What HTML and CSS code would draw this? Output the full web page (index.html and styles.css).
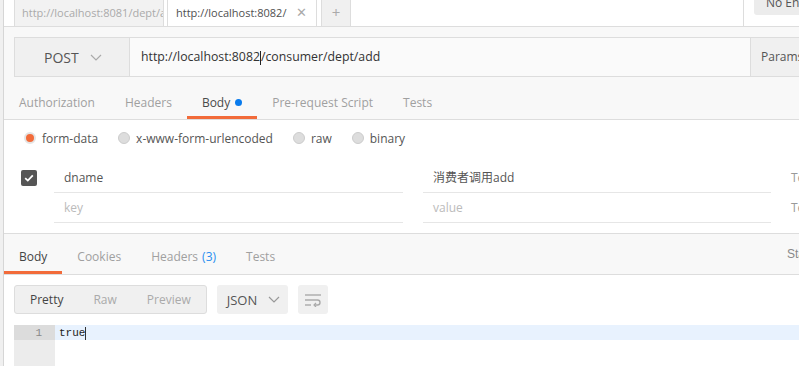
FILE: index.html
```html
<!DOCTYPE html>
<html lang="en">
<head>
    <meta charset="UTF-8">
    <title>Postman</title>
    <link rel="stylesheet" href="styles.css">
</head>
<body>
<div class="app">
    <div class="edge"></div>
    <div class="main">
        <div class="tabbar">
            <div class="tab tab-idle">http://localhost:8081/dept/add</div>
            <div class="tab tab-active"><span>http://localhost:8082/</span><span class="close">&#x2715;</span></div>
            <div class="tab tab-new">+</div>
            <div class="tabbar-fill"></div>
            <div class="env-wrap"><div class="env">No Environment</div></div>
        </div>

        <div class="req-top">
            <div class="urlrow">
                <div class="method">
                    <span>POST</span>
                    <svg width="12" height="7" viewBox="0 0 12 7"><polyline points="1,1 6,6 11,1" fill="none" stroke="#aaa" stroke-width="1.2"/></svg>
                </div>
                <div class="url">http://localhost:8082<span class="caret"></span>/consumer/dept/add</div>
                <div class="params">Params</div>
            </div>
            <div class="reqtabs">
                <div class="rtab">Authorization</div>
                <div class="rtab">Headers</div>
                <div class="rtab active">Body<span class="dot"></span></div>
                <div class="rtab">Pre-request Script</div>
                <div class="rtab">Tests</div>
            </div>
        </div>

        <div class="body-pane">
            <div class="bodytypes">
                <label class="radio"><span class="circle on"></span>form-data</label>
                <label class="radio"><span class="circle"></span>x-www-form-urlencoded</label>
                <label class="radio"><span class="circle"></span>raw</label>
                <label class="radio"><span class="circle"></span>binary</label>
            </div>
            <div class="kv">
                <div class="kv-row">
                    <div class="kv-check">
                        <span class="checkbox">
                            <svg width="10" height="8" viewBox="0 0 10 8"><polyline points="1.2,4.2 3.8,6.6 8.8,1.4" fill="none" stroke="#fff" stroke-width="1.8"/></svg>
                        </span>
                    </div>
                    <div class="kv-key">dname</div>
                    <div class="kv-val">消费者调用add</div>
                    <div class="kv-desc">Text</div>
                </div>
                <div class="kv-row">
                    <div class="kv-check"></div>
                    <div class="kv-key placeholder">key</div>
                    <div class="kv-val placeholder">value</div>
                    <div class="kv-desc">Text</div>
                </div>
            </div>
        </div>

        <div class="response">
            <div class="resp-tabs">
                <div class="rtab active">Body</div>
                <div class="rtab">Cookies</div>
                <div class="rtab">Headers <span class="count">(3)</span></div>
                <div class="rtab">Tests</div>
                <div class="status">Status: 200 OK</div>
            </div>
            <div class="toolbar">
                <div class="btn-group">
                    <span class="seg seg-on">Pretty</span>
                    <span class="seg">Raw</span>
                    <span class="seg">Preview</span>
                </div>
                <div class="format">
                    <span>JSON</span>
                    <svg width="12" height="7" viewBox="0 0 12 7"><polyline points="1,1 6,6 11,1" fill="none" stroke="#999" stroke-width="1.2"/></svg>
                </div>
                <div class="wrap-btn">
                    <svg width="18" height="14" viewBox="0 0 18 14">
                        <line x1="1" y1="2" x2="17" y2="2" stroke="#aaa" stroke-width="1.4"/>
                        <path d="M1 7 H13.5 a2.5 2.5 0 0 1 0 5 H10" fill="none" stroke="#aaa" stroke-width="1.4"/>
                        <polyline points="12,10 10,12 12,14" fill="none" stroke="#aaa" stroke-width="1.2"/>
                        <line x1="1" y1="12" x2="7" y2="12" stroke="#aaa" stroke-width="1.4"/>
                    </svg>
                </div>
            </div>
            <div class="code">
                <div class="code-line current">
                    <span class="gutter">1</span>
                    <span class="text">true<span class="caret"></span></span>
                </div>
                <div class="code-rest">
                    <span class="gutter"></span>
                </div>
            </div>
        </div>
    </div>
</div>
</body>
</html>
```

FILE: styles.css
```css
html, body {
    margin: 0;
    padding: 0;
    overflow: hidden;
    background-color: #fff;
}
body {
    font-family: 'Open Sans', 'Noto Sans CJK SC', sans-serif;
    font-size: 12px;
    color: #555;
}
.app {
    display: flex;
    height: 366px;
}
.edge {
    width: 3px;
    background-color: #f0f0f0;
    border-right: 1px solid #d6d6d6;
    flex-shrink: 0;
}
.main {
    width: 795px;
    overflow: hidden;
    display: flex;
    flex-direction: column;
}

/* top tab bar */
.tabbar {
    display: flex;
    height: 26px;
    border-bottom: 1px solid #ddd;
    padding-left: 10px;
    background-color: #fff;
    font-size: 11px;
}
.tab {
    box-sizing: border-box;
    height: 26px;
    line-height: 25px;
    border: 1px solid #ddd;
    border-top: none;
    border-bottom: none;
    white-space: nowrap;
    overflow: hidden;
    flex-shrink: 0;
}
.tab-idle {
    width: 150px;
    padding-left: 7px;
    background-color: #f2f2f2;
    color: #aaa;
}
.tab-active {
    width: 150px;
    margin-left: 3px;
    padding: 0 9px 0 8px;
    display: flex;
    justify-content: space-between;
    color: #505050;
    background-color: #fff;
}
.tab-active .close {
    color: #aaa;
    font-size: 13px;
}
.tab-new {
    width: 30px;
    margin-left: 4px;
    background-color: #f0f0f0;
    text-align: center;
    color: #aaa;
    font-size: 15px;
}
.tabbar-fill {
    flex: 1;
}
.env-wrap {
    width: 45px;
    padding-left: 10px;
    border-left: 1px solid #ddd;
    overflow: hidden;
}
.env {
    margin-top: -10px;
    height: 25px;
    line-height: 25px;
    padding-left: 12px;
    white-space: nowrap;
    background-color: #ececec;
    border-radius: 0 0 0 3px;
    color: #555;
    font-size: 12px;
}

/* request */
.req-top {
    background-color: #f8f8f8;
    padding-top: 10px;
}
.urlrow {
    display: flex;
    height: 40px;
    margin-left: 10px;
}
.method {
    box-sizing: border-box;
    width: 116px;
    flex-shrink: 0;
    display: flex;
    align-items: center;
    padding-left: 29px;
    gap: 11px;
    background-color: #f0f0f0;
    border: 1px solid #ddd;
    color: #555;
    font-size: 14px;
}
.url {
    box-sizing: border-box;
    width: 620px;
    flex-shrink: 0;
    padding-left: 11px;
    line-height: 38px;
    border-top: 1px solid #ddd;
    border-bottom: 1px solid #ddd;
    background-color: #fafafa;
    color: #333;
    font-size: 12.3px;
}
.caret {
    display: inline-block;
    width: 1px;
    height: 14px;
    background-color: #222;
    vertical-align: middle;
}
.params {
    flex-shrink: 0;
    width: 80px;
    padding-left: 10px;
    line-height: 38px;
    background-color: #f0f0f0;
    border: 1px solid #ddd;
    color: #555;
}
.reqtabs {
    display: flex;
    margin-top: 3px;
    height: 39px;
    border-bottom: 1px solid #ddd;
}
.rtab {
    box-sizing: border-box;
    height: 100%;
    padding: 8px 15px 0;
    display: flex;
    align-items: center;
    color: #a0a0a0;
    white-space: nowrap;
    border-bottom: 3px solid transparent;
}
.rtab.active {
    color: #4a4a4a;
    border-bottom-color: #f26b3a;
}
.dot {
    width: 7px;
    height: 7px;
    border-radius: 50%;
    background-color: #097bed;
    margin-left: 5px;
}

/* body pane */
.body-pane {
    background-color: #fff;
    padding-bottom: 10px;
}
.bodytypes {
    display: flex;
    align-items: center;
    height: 36px;
    padding-left: 20px;
}
.radio {
    display: flex;
    align-items: center;
    margin-right: 20px;
    color: #555;
}
.circle {
    box-sizing: border-box;
    width: 12px;
    height: 12px;
    border-radius: 50%;
    background-color: #ddd;
    border: 1px solid #ccc;
    margin-right: 6px;
}
.circle.on {
    background-color: #f26b3a;
    border: 2px solid #e4e4e4;
}
.kv {
    margin-top: 7px;
}
.kv-row {
    display: flex;
    height: 30px;
}
.kv-check {
    width: 50px;
    flex-shrink: 0;
    padding-left: 17px;
    padding-top: 7px;
    box-sizing: border-box;
}
.checkbox {
    display: flex;
    align-items: center;
    justify-content: center;
    width: 16px;
    height: 16px;
    border-radius: 2px;
    background-color: #555;
}
.kv-key, .kv-val {
    box-sizing: border-box;
    flex-shrink: 0;
    padding-left: 10px;
    line-height: 30px;
    border-bottom: 1px solid #e6e6e6;
    color: #555;
}
.kv-key {
    width: 349px;
    margin-right: 20px;
}
.kv-val {
    width: 348px;
    margin-right: 10px;
}
.placeholder {
    color: #bbb;
}
.kv-desc {
    padding-left: 10px;
    line-height: 30px;
    color: #999;
    white-space: nowrap;
}

/* response */
.response {
    flex: 1;
    border-top: 1px solid #ddd;
}
.resp-tabs {
    display: flex;
    height: 40px;
    background-color: #f8f8f8;
    border-bottom: 1px solid #ddd;
}
.resp-tabs .rtab.active {
    color: #444;
}
.count {
    color: #2a8ef0;
    margin-left: 4px;
}
.status {
    margin-left: auto;
    width: 12px;
    white-space: nowrap;
    display: flex;
    align-items: center;
    color: #888;
    font-family: 'Liberation Sans', sans-serif;
}
.toolbar {
    display: flex;
    gap: 10px;
    height: 29px;
    margin: 10px 0 0 10px;
}
.btn-group {
    display: flex;
    align-items: center;
    border: 1px solid #ddd;
    border-radius: 3px;
    background-color: #f0f0f0;
}
.seg {
    padding: 0 15px;
    color: #aaa;
}
.seg-on {
    color: #444;
}
.format {
    box-sizing: border-box;
    width: 71px;
    display: flex;
    align-items: center;
    gap: 11px;
    padding-left: 10px;
    background-color: #f0f0f0;
    border-radius: 3px;
    color: #555;
    font-size: 13px;
}
.wrap-btn {
    width: 30px;
    display: flex;
    align-items: center;
    justify-content: center;
    background-color: #f0f0f0;
    border-radius: 3px;
}
.code {
    margin: 11px 0 0 10px;
    font-family: 'Liberation Mono', monospace;
    font-size: 11px;
}
.code-line {
    display: flex;
    height: 15px;
    line-height: 17px;
}
.code-line.current {
    background-color: #e8f2fe;
}
.gutter {
    box-sizing: border-box;
    width: 41px;
    flex-shrink: 0;
    padding-right: 13px;
    text-align: right;
    background-color: #ececec;
    color: #888;
}
.current .gutter {
    background-color: #dcdcdc;
}
.text {
    padding-left: 4px;
    color: #222;
}
.text .caret {
    height: 13px;
    background-color: #333;
}
.code-rest {
    display: flex;
    height: 40px;
}
```
